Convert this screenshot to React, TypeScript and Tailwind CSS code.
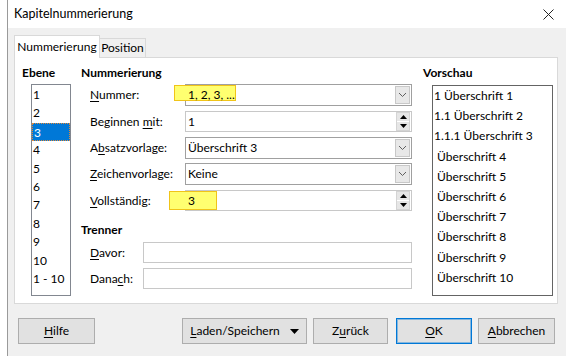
import React from "react";

const U = ({ c }: { c: string }) => <span className="underline underline-offset-[2px]">{c}</span>;

function Chevron() {
  return (
    <svg width="9" height="6" viewBox="0 0 9 6" className="block">
      <path d="M1 1 L4.5 4.5 L8 1" fill="none" stroke="#606060" strokeWidth="1" />
    </svg>
  );
}

function Dropdown({ children }: { children: React.ReactNode }) {
  return (
    <div className="flex h-[22px] w-[227px] items-center border border-[#a0a0a0] bg-white">
      <div className="flex-1 pl-[2px] leading-[20px]">{children}</div>
      <div className="mr-[1px] flex h-[18px] w-[15px] items-center justify-center border border-[#c8c8c8] bg-[#e8e8e8]">
        <Chevron />
      </div>
    </div>
  );
}

function Spin({ children }: { children: React.ReactNode }) {
  return (
    <div className="flex h-[21px] w-[227px] items-center border border-[#c8c8c8] bg-white">
      <div className="flex-1 pl-[2px] leading-[19px]">{children}</div>
      <div className="mr-[1px] flex w-[14px] flex-col gap-[1px] border border-[#d4d4d4]">
        <div className="flex h-[8px] items-center justify-center bg-[#e6e6e6]">
          <svg width="7" height="4" viewBox="0 0 7 4"><path d="M0 4 L3.5 0 L7 4 Z" fill="#000" /></svg>
        </div>
        <div className="flex h-[8px] items-center justify-center bg-[#e6e6e6]">
          <svg width="7" height="4" viewBox="0 0 7 4"><path d="M0 0 L3.5 4 L7 0 Z" fill="#000" /></svg>
        </div>
      </div>
    </div>
  );
}

function Btn({ children, w, ok }: { children: React.ReactNode; w: string; ok?: boolean }) {
  return (
    <div
      className={`flex h-[26px] items-center justify-center bg-[#e1e1e1] ${w} ${
        ok ? "border border-[#0078d7] ring-1 ring-inset ring-[#0078d7]/40" : "border border-[#adadad]"
      }`}
    >
      {children}
    </div>
  );
}

export default function App() {
  const levels = ["1", "2", "3", "4", "5", "6", "7", "8", "9", "10", "1 - 10"];
  const preview = [
    "1 Überschrift 1",
    "1.1 Überschrift 2",
    "1.1.1 Überschrift 3",
    "\u00a0Überschrift 4",
    "\u00a0Überschrift 5",
    "\u00a0Überschrift 6",
    "\u00a0Überschrift 7",
    "\u00a0Überschrift 8",
    "\u00a0Überschrift 9",
    "\u00a0Überschrift 10",
  ];
  return (
    <div
      className="flex h-[356px] w-[566px] overflow-hidden bg-white text-[12px] text-black"
      style={{ fontFamily: 'Lato, "Noto Sans", sans-serif' }}
    >
      <div className="w-[7px] shrink-0 bg-white" />
      <div className="flex flex-1 flex-col border-l border-[#9a9a9a]">
        {/* title bar */}
        <div className="flex h-[28px] shrink-0 items-center justify-between bg-white pl-[6px] pr-[12px]">
          <span className="text-[12.5px] leading-[16px]">Kapitelnummerierung</span>
          <svg width="11" height="11" viewBox="0 0 11 11">
            <path d="M0.5 0.5 L10.5 10.5 M10.5 0.5 L0.5 10.5" stroke="#222" strokeWidth="1" />
          </svg>
        </div>
        {/* body */}
        <div className="flex flex-1 flex-col bg-[#f0f0f0] pl-[6px] pr-[8px]">
          {/* tabs */}
          <div className="mt-[7px] flex h-[22px] items-end">
            <div className="relative z-10 -mb-px flex h-[23px] w-[86px] items-center justify-center border border-b-0 border-[#d9d9d9] bg-white">
              Nummerierung
            </div>
            <div className="flex h-[19px] w-[46px] items-center justify-center border border-b-0 border-l-0 border-[#d9d9d9] bg-[#f0f0f0]">
              Position
            </div>
          </div>
          {/* panel */}
          <div className="flex h-[247px] border border-[#d9d9d9] bg-white">
            {/* col 1 */}
            <div className="ml-[7px] mt-[7px] flex w-[59px] flex-col">
              <div className="h-[16px] font-bold leading-[16px]">Ebene</div>
              <div className="ml-[9px] mt-[3px] h-[212px] w-[40px] border border-[#828790] bg-white pt-[1px]">
                {levels.map((l, i) => (
                  <div
                    key={l}
                    className={`h-[18.4px] pl-[1px] leading-[18px] ${
                      i === 2 ? "border border-dotted border-[#e08a3c] bg-[#0078d7] pl-0 text-white" : ""
                    }`}
                  >
                    {l}
                  </div>
                ))}
              </div>
            </div>
            {/* col 2 */}
            <div className="mt-[7px] flex w-[342px] flex-col">
              <div className="h-[16px] font-bold leading-[16px]">Nummerierung</div>
              <div className="mt-[3px] flex items-center">
                <div className="ml-[9px] w-[95px]"><U c="N" />ummer:</div>
                <Dropdown>
                  <span className="relative">
                    <span className="absolute -left-[14px] -top-[2px] h-[16px] w-[62px] border border-[#f0c419] bg-[#ffff70]" />
                    <span className="relative">1, 2, 3, ...</span>
                  </span>
                </Dropdown>
              </div>
              <div className="mt-[5px] flex items-center">
                <div className="ml-[9px] w-[95px]">Beginnen <U c="m" />it:</div>
                <Spin>1</Spin>
              </div>
              <div className="mt-[5px] flex items-center">
                <div className="ml-[9px] w-[95px]">A<U c="b" />satzvorlage:</div>
                <Dropdown>Überschrift 3</Dropdown>
              </div>
              <div className="mt-[4px] flex items-center">
                <div className="ml-[9px] w-[95px]"><U c="Z" />eichenvorlage:</div>
                <Dropdown>Keine</Dropdown>
              </div>
              <div className="mt-[5px] flex items-center">
                <div className="ml-[9px] w-[95px]"><U c="V" />ollständig:</div>
                <Spin>
                  <span className="relative">
                    <span className="absolute -left-[19px] -top-[2px] h-[19px] w-[48px] border border-[#f0c419] bg-[#ffff70]" />
                    <span className="relative">3</span>
                  </span>
                </Spin>
              </div>
              <div className="mt-[11px] h-[16px] font-bold leading-[16px]">Trenner</div>
              <div className="mt-[4px] flex items-center">
                <div className="ml-[9px] w-[53px]"><U c="D" />avor:</div>
                <div className="h-[21px] w-[269px] border border-[#c8c8c8] bg-white" />
              </div>
              <div className="mt-[5px] flex items-center">
                <div className="ml-[9px] w-[53px]">Dana<U c="c" />h:</div>
                <div className="h-[21px] w-[269px] border border-[#c8c8c8] bg-white" />
              </div>
            </div>
            {/* col 3 */}
            <div className="mt-[7px] flex flex-col">
              <div className="h-[16px] font-bold leading-[16px]">Vorschau</div>
              <div className="ml-[9px] mt-[4px] h-[211px] w-[121px] border border-[#646464] bg-white pl-[1px]">
                {preview.map((p) => (
                  <div key={p} className="h-[20.2px] whitespace-pre leading-[20px]">
                    {p}
                  </div>
                ))}
              </div>
            </div>
          </div>
          {/* buttons */}
          <div className="mt-[14px] flex items-center">
            <div className="ml-[4px]">
              <Btn w="w-[77px]"><U c="H" />ilfe</Btn>
            </div>
            <div className="ml-[87px]">
              <Btn w="w-[125px]">
                <span className="mr-[10px]"><U c="L" />aden/Speichern</span>
                <svg width="9" height="5" viewBox="0 0 9 5"><path d="M0 0 L9 0 L4.5 5 Z" fill="#000" /></svg>
              </Btn>
            </div>
            <div className="ml-[6px]">
              <Btn w="w-[75px]">Z<U c="u" />rück</Btn>
            </div>
            <div className="ml-[8px]">
              <Btn w="w-[76px]" ok><U c="O" />K</Btn>
            </div>
            <div className="ml-[6px]">
              <Btn w="w-[77px]"><U c="A" />bbrechen</Btn>
            </div>
          </div>
        </div>
      </div>
    </div>
  );
}
